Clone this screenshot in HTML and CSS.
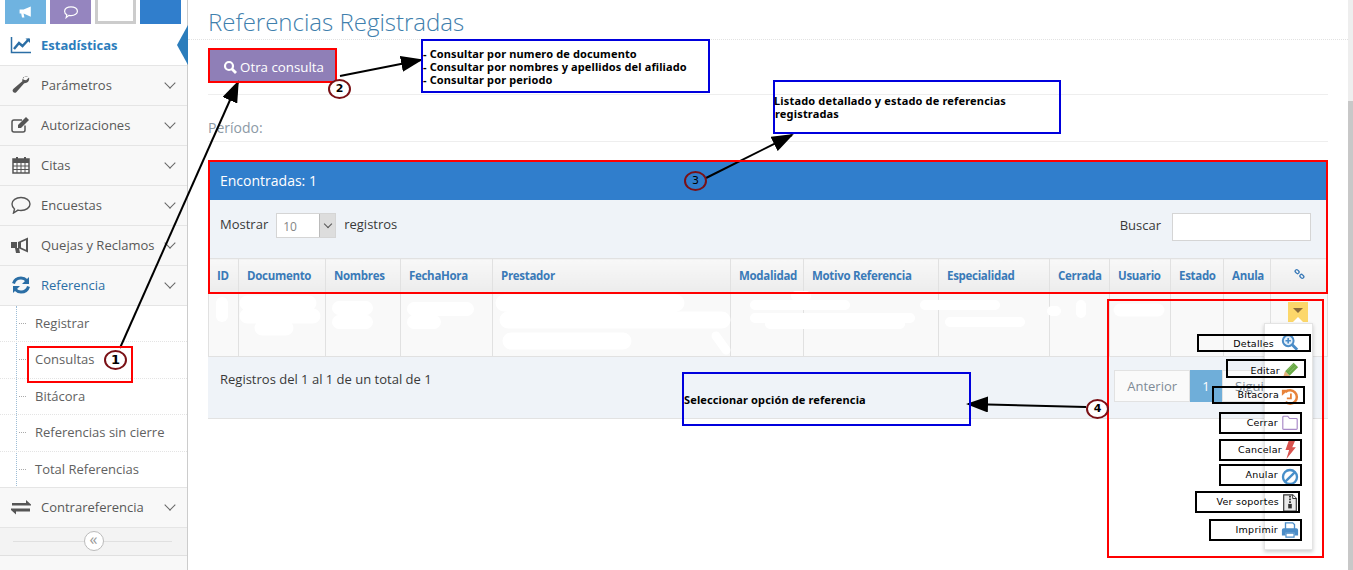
FILE: index.html
```html
<!DOCTYPE html>
<html lang="es">
<head>
    <meta charset="UTF-8">
    <title>Referencias Registradas</title>
    <link rel="stylesheet" href="styles.css">
</head>
<body>
<div class="page">
    <aside class="sidebar">
        <div class="shortcuts">
            <span class="shortcut shortcut-info">
                <svg width="16" height="14" viewBox="0 0 20 16"><path d="M2 5h5l9-4v13L7 10l1 5H5L4 10H2z" fill="#fff"/></svg>
            </span>
            <span class="shortcut shortcut-purple">
                <svg width="16" height="14" viewBox="0 0 20 16"><path d="M10 1.500c4.700 0 8 2.500 8 5.500s-3.300 5.500-8 5.500c-1 0-1.800-.1-2.600-.3L4 15l.8-3.600C3 10.400 2 8.800 2 7c0-3 3.300-5.500 8-5.500z" fill="none" stroke="#fff" stroke-width="1.500"/></svg>
            </span>
            <span class="shortcut shortcut-blank"></span>
            <span class="shortcut shortcut-blue"></span>
        </div>
        <ul class="nav">
            <li class="nav-item nav-current">
                <svg class="nav-icon" viewBox="0 0 22 18"><path d="M1.500 1v15.500H21" fill="none" stroke="#2b6ea5" stroke-width="1.500"/><path d="M4 13l5-6 3.500 3L19 3" fill="none" stroke="#2b6ea5" stroke-width="2.500"/><path d="M15.500 2.500H20V7z" fill="#2b6ea5"/></svg>
                <span class="nav-text">Estadísticas</span>
            </li>
            <li class="nav-item">
                <svg class="nav-icon" viewBox="0 0 22 18"><path d="M18 .5c-3-.8-6 1.600-5.700 4.800L3.500 12.800c-2.500 2.200.7 5.500 3 3.100l7.700-8.700c3.200.4 5.800-2.700 4.800-5.800l-2.900 2.900-2.600-.6-.6-2.600z" fill="#555"/></svg>
                <span class="nav-text">Parámetros</span><i class="chevron"></i>
            </li>
            <li class="nav-item">
                <svg class="nav-icon" viewBox="0 0 22 18"><path d="M15 9.500V14a2 2 0 0 1-2 2H4a2 2 0 0 1-2-2V6a2 2 0 0 1 2-2h8" fill="none" stroke="#555" stroke-width="1.500"/><path d="M8 9l8-8 3 3-8 8H8z" fill="#555"/></svg>
                <span class="nav-text">Autorizaciones</span><i class="chevron"></i>
            </li>
            <li class="nav-item">
                <svg class="nav-icon" viewBox="0 0 22 18"><path d="M3 3h16v14H3z" fill="none" stroke="#555" stroke-width="1.500"/><path d="M3 3h16v4H3zM6 1h2v4H6zM14 1h2v4h-2z" fill="#555"/><path d="M3 10h16M3 13.500h16M7 7v10M11 7v10M15 7v10" stroke="#555" stroke-width="1"/></svg>
                <span class="nav-text">Citas</span><i class="chevron"></i>
            </li>
            <li class="nav-item">
                <svg class="nav-icon" viewBox="0 0 22 18"><path d="M11 1.500c5 0 9 2.700 9 6.500s-4 6.500-9 6.500c-1 0-2-.1-3-.4L3.500 17l1-4C2.900 11.800 2 10 2 8c0-3.800 4-6.500 9-6.500z" fill="none" stroke="#555" stroke-width="1.400"/></svg>
                <span class="nav-text">Encuestas</span><i class="chevron"></i>
            </li>
            <li class="nav-item">
                <svg class="nav-icon" viewBox="0 0 22 18"><path d="M1 6h6v6H1zM5 12h4l1 5H6z" fill="#555"/><path d="M8 6l10-4.500v15L8 12z" fill="#555"/><path d="M11 6.500l5-2.200v9.400l-5-2.200z" fill="#f8f8f8"/></svg>
                <span class="nav-text">Quejas y Reclamos</span><i class="chevron"></i>
            </li>
            <li class="nav-item nav-open">
                <svg class="nav-icon" viewBox="0 0 22 18"><path d="M3.500 7.500C4.500 4 7.500 2 11 2c2.400 0 4.300 1 5.700 2.500" fill="none" stroke="#2b6ea5" stroke-width="3"/><path d="M19 1v7h-7z" fill="#2b6ea5"/><path d="M18.500 10.500C17.500 14 14.500 16 11 16c-2.400 0-4.300-1-5.700-2.500" fill="none" stroke="#2b6ea5" stroke-width="3"/><path d="M3 17v-7h7z" fill="#2b6ea5"/></svg>
                <span class="nav-text">Referencia</span><i class="chevron"></i>
            </li>
            <li>
                <ul class="subnav">
                    <li>Registrar</li>
                    <li>Consultas</li>
                    <li>Bitácora</li>
                    <li>Referencias sin cierre</li>
                    <li>Total Referencias</li>
                </ul>
            </li>
            <li class="nav-item">
                <svg class="nav-icon" viewBox="0 0 22 18"><path d="M2 5h14V2l5 4.500v1H2zM20 10.500v3H6v3l-5-4.500v-1.500z" fill="#555"/></svg>
                <span class="nav-text">Contrareferencia</span><i class="chevron"></i>
            </li>
        </ul>
        <div class="collapse-bar"><span class="collapse-btn">«</span></div>
    </aside>

    <main class="main">
        <h1 class="page-title">Referencias Registradas</h1>
        <div class="content">
            <button class="btn-query">
                <svg width="14" height="14" viewBox="0 0 14 14"><circle cx="6" cy="6" r="4" fill="none" stroke="#fff" stroke-width="2.200"/><path d="M9 9l4 4" stroke="#fff" stroke-width="2.800"/></svg>
                Otra consulta
            </button>
            <div class="period">Período:</div>

            <section class="panel">
                <div class="panel-head">Encontradas: 1</div>
                <div class="toolbar">
                    <div class="length">
                        Mostrar
                        <span class="select"><span class="select-value">10</span><span class="select-arrow"><i></i></span></span>
                        registros
                    </div>
                    <div class="search">Buscar <span class="search-box"></span></div>
                </div>
                <table class="grid">
                    <colgroup>
                        <col class="c-id"><col class="c-doc"><col class="c-nom"><col class="c-fecha"><col class="c-pres">
                        <col class="c-mod"><col class="c-mot"><col class="c-esp"><col class="c-cer"><col class="c-usu">
                        <col class="c-est"><col class="c-anu"><col>
                    </colgroup>
                    <thead>
                        <tr>
                            <th>ID</th><th>Documento</th><th>Nombres</th><th>FechaHora</th><th>Prestador</th>
                            <th>Modalidad</th><th>Motivo Referencia</th><th>Especialidad</th><th>Cerrada</th>
                            <th>Usuario</th><th>Estado</th><th>Anula</th>
                            <th class="link-col">
                                <svg width="11" height="12" viewBox="0 0 13 13"><g fill="none" stroke="#3a7ab8" stroke-width="1.600"><rect x="-2.500" y="-1.800" width="5" height="3.600" rx="1.800" transform="translate(3.700 3.700) rotate(45)"/><rect x="-2.500" y="-1.800" width="5" height="3.600" rx="1.800" transform="translate(9.300 9.300) rotate(45)"/></g></svg>
                            </th>
                        </tr>
                    </thead>
                    <tbody>
                        <tr>
                            <td></td><td></td><td></td><td></td><td></td><td></td><td></td><td></td><td></td><td></td><td></td><td></td>
                            <td class="action-cell"><span class="action-btn"><i></i></span></td>
                        </tr>
                    </tbody>
                </table>
                <div class="panel-foot">
                    <span>Registros del 1 al 1 de un total de 1</span>
                    <div class="pager">
                        <span class="page-link">Anterior</span>
                        <span class="page-link page-active">1</span>
                        <span class="page-link">Siguiente</span>
                    </div>
                </div>
            </section>
        </div>
    </main>
    <div class="scrollbar"><span class="scrollbar-thumb"></span></div>

    <!-- menu desplegado sobre la tabla -->
    <ul class="action-menu">
        <li><svg viewBox="0 0 20 20"><circle cx="8" cy="7.500" r="6" fill="#e4effa" stroke="#4a8cc7" stroke-width="2.200"/><path d="M5 7.500h6M8 4.500v6" stroke="#4a8cc7" stroke-width="1.800"/><path d="M12.500 12l5.500 5.500" stroke="#4a8cc7" stroke-width="3.200"/></svg></li>
        <li><svg viewBox="0 0 20 20"><path d="M4.500 11.500L14 2l5 5-9.500 9.500z" fill="#69aa46"/><path d="M7 10.500l7-7M9 13l7-7" stroke="#8ac06a" stroke-width="1"/><path d="M4.500 11.500l5 5L2 19z" fill="#e7b07a"/></svg></li>
        <li><svg viewBox="0 0 20 20"><path d="M5 4.500A7.500 7.500 0 1 1 5 15.500" fill="none" stroke="#e8833a" stroke-width="2.800"/><path d="M1 2h7.500L1 8.500z" fill="#e8833a"/><path d="M11 6v5.500H6.500" fill="none" stroke="#e8833a" stroke-width="2"/></svg></li>
        <li><svg viewBox="0 0 20 20"><path d="M2 17V3.500q0-1 1-1h4.500l2 2.500H17q1 0 1 1v10q0 1-1 1H3q-1 0-1-1z" fill="#fff" stroke="#a98ac8" stroke-width="1.300"/></svg></li>
        <li><svg viewBox="0 0 20 20"><path d="M8.500 0h7l-3 7h4L6 20l3-10H5z" fill="#d9534f"/></svg></li>
        <li><svg viewBox="0 0 20 20"><circle cx="10" cy="10" r="7.800" fill="none" stroke="#478fca" stroke-width="2.600"/><path d="M4.500 15.500l11-11" stroke="#478fca" stroke-width="2.600"/></svg></li>
        <li><svg viewBox="0 0 20 20"><path d="M3 1h10l4 4v14H3z" fill="#e9e9e9" stroke="#333" stroke-width="1.300"/><path d="M13 1v4h4" fill="#fff" stroke="#333" stroke-width="1.100"/><path d="M9 2h2v2H9zM9 5h2v2H9zM9 8h2v2H9z" fill="#333"/><path d="M8 11h4v5H8z" fill="#333"/></svg></li>
        <li><svg viewBox="0 0 20 20"><path d="M5 2h8l2 2v6H5z" fill="#fff" stroke="#4a8cc7" stroke-width="1.500"/><path d="M3 8h14q2 0 2 2v6h-4v-3H5v3H1v-6q0-2 2-2z" fill="#4a8cc7"/><path d="M5.500 13.500h9V18h-9z" fill="#fff" stroke="#4a8cc7" stroke-width="1.300"/></svg></li>
    </ul>

    <!-- anotaciones del manual -->
    <svg class="notes-lines" width="1353" height="570" viewBox="0 0 1353 570">
        <defs>
            <marker id="head" markerWidth="22" markerHeight="16" refX="20" refY="8" orient="auto" markerUnits="userSpaceOnUse">
                <path d="M0 0L22 8L0 16z" fill="#000"/>
            </marker>
        </defs>
        <g class="blur-marks">
            <path d="M222 303v13" stroke-width="12"/>
            <path d="M247 303h62M247 316h66M262 328h24" stroke-width="15"/>
            <path d="M339 308h27M339 322h27" stroke-width="14"/>
            <path d="M414 309h53M414 322h20" stroke-width="14"/>
            <path d="M504 303h172M508 320h214M511 341h112" stroke-width="17"/>
            <path d="M716 336l10 14" stroke-width="9"/>
            <path d="M796 296h10M755 305h90M755 318h155M770 324h130" stroke-width="10"/>
            <path d="M925 305h70M950 322h70" stroke-width="10"/>
            <path d="M1052 311h4M1081 305v8" stroke-width="10"/>
            <path d="M1120 310h38" stroke-width="13"/>
        </g>
        <g class="arrows">
            <path d="M120 348L238 82" marker-end="url(#head)"/>
            <path d="M340 76L421 60" marker-end="url(#head)"/>
            <path d="M706 178L792 135" marker-end="url(#head)"/>
            <path d="M1086 407L968 404" marker-end="url(#head)"/>
        </g>
    </svg>

    <div class="red-box red-consultas"></div>
    <div class="red-box red-btn"></div>
    <div class="red-box red-panel"></div>
    <div class="red-box red-menu"></div>

    <div class="note note-a">- Consultar por numero de documento<br>- Consultar por nombres y apellidos del afiliado<br>- Consultar por periodo</div>
    <div class="note note-b">Listado detallado y estado de referencias<br>registradas</div>
    <div class="note note-c">Seleccionar opción de referencia</div>

    <span class="step step-1">1</span>
    <span class="step step-2">2</span>
    <span class="step step-3">3</span>
    <span class="step step-4">4</span>

    <div class="tag tag-detalles">Detalles</div>
    <div class="tag tag-editar">Editar</div>
    <div class="tag tag-bitacora">Bitacora</div>
    <div class="tag tag-cerrar">Cerrar</div>
    <div class="tag tag-cancelar">Cancelar</div>
    <div class="tag tag-anular">Anular</div>
    <div class="tag tag-soportes">Ver soportes</div>
    <div class="tag tag-imprimir">Imprimir</div>
</div>
</body>
</html>
```

FILE: styles.css
```css
* {
    box-sizing: border-box;
}
html, body {
    margin: 0;
    height: 100%;
    overflow: hidden;
}
body {
    font-family: "Open Sans", Arial, sans-serif;
    font-size: 13px;
    color: #393939;
    background: #fff;
}
ul {
    list-style: none;
    margin: 0;
    padding: 0;
}
.page {
    position: relative;
    display: flex;
    width: 1353px;
    height: 570px;
    overflow: hidden;
}

/* sidebar */
.sidebar {
    width: 188px;
    flex: none;
    background: #f8f8f8;
    border-right: 1px solid #ccc;
}
.shortcuts {
    display: flex;
    gap: 4px;
    height: 26px;
    padding: 0 0 2px 5px;
    background: #fff;
}
.shortcut {
    display: flex;
    align-items: center;
    justify-content: center;
    width: 41px;
}
.shortcut-info { background: #6fb3e0; }
.shortcut-purple { background: #9585bf; }
.shortcut-blank { background: #fff; border: 3px solid #ccc; border-top: 0; }
.shortcut-blue { background: #307ecc; }
.nav-item {
    position: relative;
    display: flex;
    align-items: center;
    height: 40px;
    padding: 0 0 1px 10px;
    border-bottom: 1px solid #e5e5e5;
    color: #585858;
}
.nav-icon {
    width: 22px;
    height: 18px;
    flex: none;
    margin-right: 9px;
}
.nav-text {
    flex: 1;
}
.nav-current {
    background: #fff;
}
.nav-current .nav-text {
    color: #2b7dbc;
    font-weight: 700;
}
.nav-current::after {
    content: "";
    position: absolute;
    right: -1px;
    top: -1px;
    border: solid transparent;
    border-width: 20px 11px 20px 0;
    border-right-color: #2b7dbc;
}
.nav-open .nav-text {
    color: #2b6ea5;
}
.chevron {
    width: 8px;
    height: 8px;
    margin: -4px 13px 0 0;
    border-right: 1.5px solid #666;
    border-bottom: 1.5px solid #666;
    transform: rotate(45deg);
}
.subnav {
    position: relative;
    background: #fff;
}
.subnav::before {
    content: "";
    position: absolute;
    left: 16px;
    top: 0;
    bottom: 0;
    border-left: 1px dotted #9dbdd6;
}
.subnav li {
    position: relative;
    height: 36.400px;
    padding-left: 35px;
    line-height: 35px;
    color: #616161;
    border-bottom: 1px dotted #e4e4e4;
}
.subnav li:last-child {
    border-bottom: 1px solid #e5e5e5;
}
.subnav li::before {
    content: "";
    position: absolute;
    left: 19px;
    top: 17px;
    width: 7px;
    border-top: 1px dotted #aaa;
}
.collapse-bar {
    position: relative;
    display: flex;
    align-items: center;
    justify-content: center;
    height: 28px;
    background: #f3f3f3;
    border-bottom: 1px solid #e0e0e0;
}
.collapse-bar::before {
    content: "";
    position: absolute;
    left: 13px;
    right: 15px;
    top: 13px;
    border-top: 1px solid #e0e0e0;
}
.collapse-btn {
    position: relative;
    width: 20px;
    height: 20px;
    border-radius: 50%;
    border: 1px solid #bbb;
    background: #fff;
    color: #999;
    font-size: 16px;
    line-height: 15px;
    text-align: center;
}

/* main */
.main {
    flex: 1;
    min-width: 0;
}
.page-title {
    margin: 0;
    height: 40px;
    padding: 4px 0 0 20px;
    font-size: 24px;
    font-weight: 300;
    line-height: 36px;
    color: #3f80ad;
    border-bottom: 1px dotted #e2e2e2;
}
.content {
    padding: 9px 20px 0;
}
.btn-query {
    display: flex;
    align-items: center;
    justify-content: center;
    gap: 3px;
    width: 127px;
    height: 34px;
    margin-left: 1px;
    padding: 1px 0 0 2px;
    border: 0;
    background: #8f7fb7;
    color: #fff;
    font-family: inherit;
    font-size: 13.300px;
}
.period {
    height: 48px;
    margin-top: 11px;
    padding-top: 22px;
    border-top: 1px solid #eee;
    border-bottom: 1px solid #eee;
    color: #8d9aa6;
    font-size: 14px;
    line-height: 21px;
}
.panel {
    margin-top: 20px;
}
.panel-head {
    height: 38px;
    padding-left: 12px;
    background: #307ecc;
    color: #fff;
    font-size: 14px;
    line-height: 38px;
}
.toolbar {
    display: flex;
    justify-content: space-between;
    height: 58px;
    padding: 13px 17px 0 12px;
    background: #eff3f8;
}
.length, .search {
    display: flex;
    align-items: flex-start;
    gap: 8px;
    line-height: 22px;
}
.search {
    gap: 11px;
    line-height: 25px;
}
.select {
    display: flex;
    width: 60px;
    height: 25px;
    background: #fff;
    border: 1px solid #d5d5d5;
}
.select-value {
    flex: 1;
    padding-left: 6px;
    color: #858585;
    font-size: 12px;
    line-height: 25px;
}
.select-arrow {
    display: flex;
    align-items: center;
    justify-content: center;
    width: 16px;
    background: #ddd;
    border-left: 1px solid #bbb;
}
.select-arrow i {
    width: 6px;
    height: 6px;
    margin-top: -3px;
    border-right: 1px solid #555;
    border-bottom: 1px solid #555;
    transform: rotate(45deg);
}
.search-box {
    display: block;
    width: 139px;
    height: 28px;
    background: #fff;
    border: 1px solid #d5d5d5;
}
.grid {
    width: 100%;
    table-layout: fixed;
    border-collapse: collapse;
}
.grid th, .grid td {
    border: 1px solid #e1e1e1;
}
.grid th {
    height: 34px;
    padding: 0 0 1px 8px;
    background: linear-gradient(#f8f8f8, #ececec);
    color: #3a7ab8;
    font-size: 11.500px;
    font-weight: 700;
    letter-spacing: -.3px;
    text-align: left;
    white-space: nowrap;
}
.grid td {
    height: 64px;
    background: #f9f9f9;
}
.grid th.link-col {
    padding: 0;
    text-align: center;
}
.c-id { width: 30px; }
.c-doc { width: 87px; }
.c-nom { width: 75px; }
.c-fecha { width: 92px; }
.c-pres { width: 238px; }
.c-mod { width: 73px; }
.c-mot { width: 135px; }
.c-esp { width: 111px; }
.c-cer { width: 60px; }
.c-usu { width: 61px; }
.c-est { width: 53px; }
.c-anu { width: 47px; }
.action-cell {
    vertical-align: top;
    padding: 9px 0 0 17px;
}
.action-btn {
    position: relative;
    display: flex;
    justify-content: center;
    padding-top: 6px;
    width: 20px;
    height: 20px;
    background: #fcd76a;
}
.action-btn::after {
    content: "";
    position: absolute;
    left: 5px;
    bottom: 0;
    border: solid transparent;
    border-width: 0 5px 5px;
    border-bottom-color: #fff;
}
.action-btn i {
    width: 0;
    height: 0;
    border: solid transparent;
    border-width: 5px 5px 0;
    border-top-color: #8a6d3b;
}
.panel-foot {
    display: flex;
    justify-content: space-between;
    height: 62px;
    padding: 13px 24px 0 12px;
    background: #eff3f8;
    border-bottom: 1px solid #e2e2e2;
    font-size: 13px;
    line-height: 18px;
}
.pager {
    display: flex;
    height: 32px;
}
.page-link {
    padding: 0 12px;
    color: #7f8b96;
    background: #fafafa;
    border: 1px solid #e2e2e2;
    line-height: 30px;
}
.page-active {
    width: 32px;
    padding: 0;
    background: #6faed9;
    border-color: #6faed9;
    color: #fff;
    text-align: center;
}
.scrollbar {
    width: 5px;
    flex: none;
    padding-top: 101px;
    background: #eee;
}
.scrollbar-thumb {
    display: block;
    height: 100%;
    background: #c8c8c8;
}

/* dropdown menu */
.action-menu {
    position: absolute;
    left: 1264px;
    top: 323px;
    width: 49px;
    height: 227px;
    padding-top: 6px;
    background: #fff;
    border: 1px solid #e4e4e4;
    box-shadow: 0 2px 4px rgba(0, 0, 0, .2);
}
.action-menu li {
    display: flex;
    align-items: center;
    justify-content: center;
    height: 26.700px;
    padding-left: 2px;
}
.action-menu svg {
    width: 18px;
    height: 18px;
}

/* annotations */
.notes-lines {
    position: absolute;
    left: 0;
    top: 0;
    pointer-events: none;
}
.blur-marks path {
    fill: none;
    stroke: #fff;
    stroke-linecap: round;
    stroke-linejoin: round;
}
.arrows path {
    fill: none;
    stroke: #000;
    stroke-width: 2;
}
.red-box {
    position: absolute;
    border: 2px solid #f00;
}
.red-consultas { left: 27px; top: 346px; width: 106px; height: 37px; }
.red-btn { left: 208px; top: 48px; width: 129px; height: 35px; }
.red-panel { left: 208px; top: 160px; width: 1120px; height: 134px; }
.red-menu { left: 1107px; top: 299px; width: 217px; height: 259px; }
.note {
    position: absolute;
    display: flex;
    flex-direction: column;
    justify-content: center;
    border: 2px solid #00d;
    font-family: "Noto Sans", sans-serif;
    font-size: 11px;
    font-weight: 700;
    letter-spacing: .13px;
    line-height: 13px;
    color: #000;
}
.note-a { left: 421px; top: 39px; width: 289px; height: 54px; }
.note-b { left: 773px; top: 80px; width: 288px; height: 54px; letter-spacing: .17px; text-indent: -1px; }
.note-c { left: 682px; top: 372px; width: 289px; height: 54px; }
.step {
    position: absolute;
    width: 23px;
    height: 20px;
    border: 2px solid #7a1015;
    border-radius: 50%;
    background: #fff;
    color: #000;
    font-family: "DejaVu Sans", sans-serif;
    font-size: 11px;
    font-weight: 700;
    line-height: 16px;
    text-align: center;
}
.step-1 { left: 104px; top: 350px; font-size: 13px; }
.step-2 { left: 328px; top: 79px; }
.step-3 { left: 684px; top: 171px; background: none; font-weight: 400; }
.step-4 { left: 1086px; top: 399px; }
.tag {
    position: absolute;
    border: 2px solid #000;
    font-family: "DejaVu Sans", sans-serif;
    font-size: 9.500px;
    letter-spacing: .25px;
    color: #000;
    text-align: right;
    white-space: nowrap;
}
.tag-detalles { left: 1197px; top: 334px; width: 114px; height: 18px; line-height: 15px; padding-right: 35px; }
.tag-editar { left: 1226px; top: 359px; width: 80px; height: 19px; line-height: 19px; padding-right: 24px; }
.tag-bitacora { left: 1212px; top: 386px; width: 93px; height: 18px; line-height: 14px; padding-right: 24px; }
.tag-cerrar { left: 1219px; top: 412px; width: 83px; height: 22px; line-height: 18px; padding-right: 22px; }
.tag-cancelar { left: 1219px; top: 439px; width: 83px; height: 22px; line-height: 18px; padding-right: 18px; }
.tag-anular { left: 1219px; top: 464px; width: 83px; height: 22px; line-height: 18px; padding-right: 22px; }
.tag-soportes { left: 1195px; top: 491px; width: 105px; height: 22px; line-height: 18px; padding-right: 19px; }
.tag-imprimir { left: 1209px; top: 519px; width: 93px; height: 22px; line-height: 18px; padding-right: 22px; }
```
